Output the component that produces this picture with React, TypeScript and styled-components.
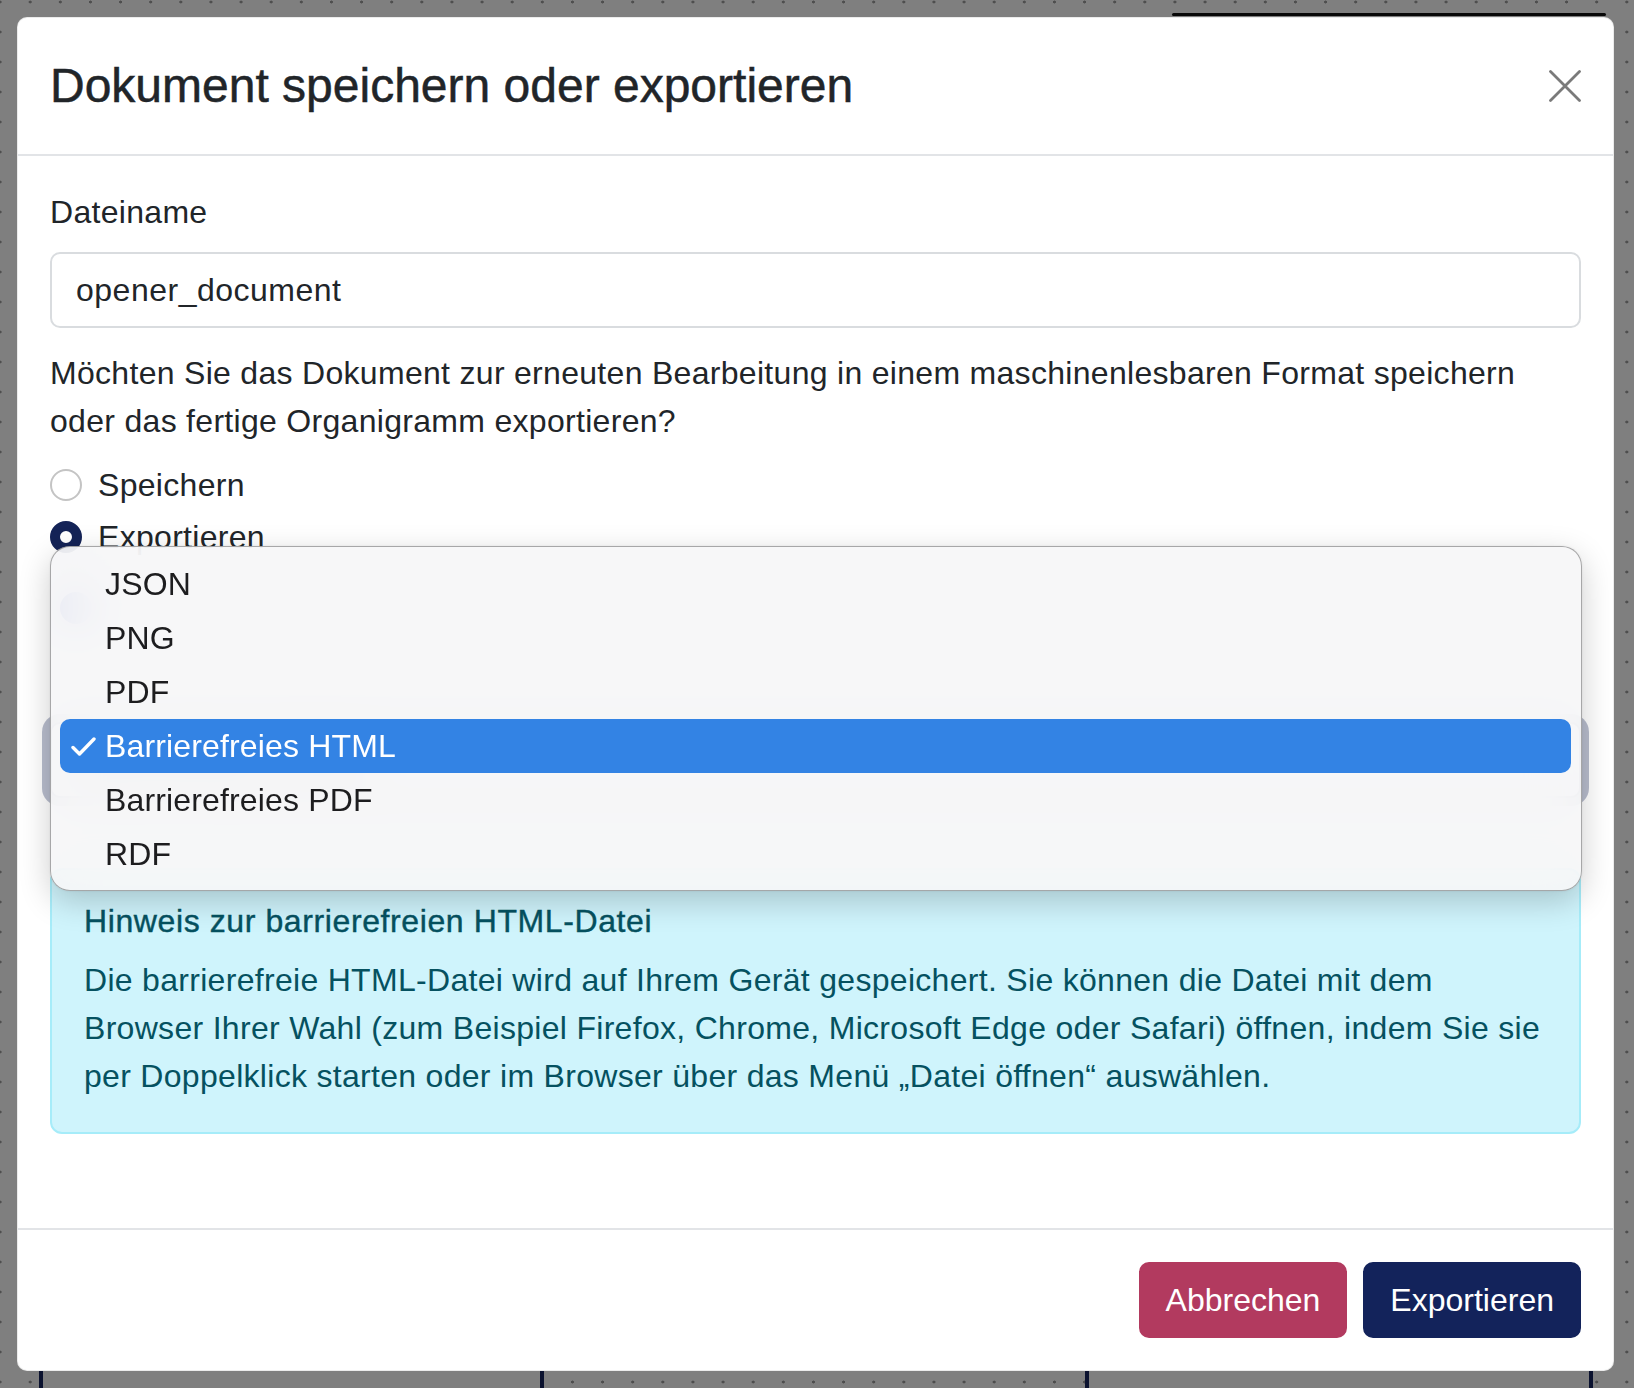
import React from "react";
import styled, { createGlobalStyle } from "styled-components";

const GlobalStyle = createGlobalStyle`
  html, body {
    margin: 0;
    padding: 0;
  }
  body {
    font-family: "Liberation Sans", Arial, sans-serif;
    color: #212529;
  }
  * {
    box-sizing: border-box;
  }
`;

// canvas behind the dialog (org chart editor)
const Page = styled.div`
  position: relative;
  width: 1634px;
  height: 1388px;
  overflow: hidden;
  background-color: #fff;
  background-image: radial-gradient(circle, #9c9c9c 1.2px, transparent 1.8px);
  background-size: 30.13px 30px;
  background-position: -15px -13px;
`;

const ChartNode = styled.div<{ $x: number; $y: number; $w: number }>`
  position: absolute;
  left: ${(p) => p.$x}px;
  top: ${(p) => p.$y}px;
  width: ${(p) => p.$w}px;
  height: 160px;
  background: #fff;
  border: 4px solid #16245e;
  border-radius: 6px;
`;

const Connector = styled.div<{ $x: number; $y: number; $w: number }>`
  position: absolute;
  left: ${(p) => p.$x}px;
  top: ${(p) => p.$y}px;
  width: ${(p) => p.$w}px;
  height: 3px;
  border-radius: 2px;
  background: #111;
`;

const Backdrop = styled.div`
  position: absolute;
  inset: 0;
  background: rgba(0, 0, 0, 0.5);
`;

const ModalLayer = styled.div`
  position: absolute;
  inset: 0;
  padding: 17px 0 0 17px;
`;

const Modal = styled.div`
  width: 1597px;
  height: 1354px;
  display: flex;
  flex-direction: column;
  background: #fff;
  border: 1px solid rgba(0, 0, 0, 0.08);
  border-radius: 10px;
`;

const Header = styled.div`
  height: 138px;
  padding: 0 32px;
  display: flex;
  align-items: center;
  justify-content: space-between;
  border-bottom: 2px solid #e2e4e7;
`;

const Title = styled.h4`
  margin: 0;
  font-size: 48px;
  line-height: 1.2;
  font-weight: 400;
  color: #212529;
  -webkit-text-stroke: 0.5px #212529;
`;

const CloseButton = styled.button`
  width: 32px;
  height: 32px;
  padding: 0;
  border: none;
  background: none;
  display: flex;
  cursor: pointer;
`;

const Body = styled.div`
  position: relative;
  flex: 1;
  padding: 32px 32px 0;
  letter-spacing: 0.3px;
`;

const FieldLabel = styled.label`
  display: block;
  font-size: 32px;
  line-height: 48px;
  margin-bottom: 16px;
`;

const TextInput = styled.input`
  display: block;
  width: 100%;
  height: 76px;
  padding: 12px 24px;
  margin-bottom: 21px;
  font-family: inherit;
  font-size: 32px;
  line-height: 48px;
  letter-spacing: 0.5px;
  color: #212529;
  background: #fff;
  border: 2px solid #d9dcdf;
  border-radius: 10px;
  outline: none;
`;

const Question = styled.p`
  max-width: 1490px;
  margin: 0 0 16px;
  font-size: 32px;
  line-height: 48px;
`;

const CheckRow = styled.div<{ $mb?: number; $mt?: number }>`
  display: flex;
  align-items: center;
  gap: 16px;
  height: 48px;
  margin-top: ${(p) => p.$mt ?? 0}px;
  margin-bottom: ${(p) => p.$mb ?? 0}px;
  font-size: 32px;
`;

const RadioDot = styled.span<{ $checked?: boolean }>`
  width: 32px;
  height: 32px;
  flex: none;
  border-radius: 50%;
  background: #fff;
  border: ${(p) => (p.$checked ? "10px solid #142357" : "2px solid #c4c4c4")};
`;

const CheckBox = styled.span`
  width: 32px;
  height: 32px;
  flex: none;
  margin-left: 10px;
  border-radius: 50%;
  background: #2a46b8;
`;

const Select = styled.select`
  display: block;
  width: 100%;
  height: 76px;
  margin-top: 90px;
  padding: 12px 24px;
  font-family: inherit;
  font-size: 32px;
  color: #212529;
  background: #fff;
  border: 2px solid #8a91ab;
  border-radius: 10px;
  appearance: none;
  box-shadow: 0 0 0 8px rgba(19, 35, 91, 0.3);
`;

const Alert = styled.div`
  margin-top: 70px;
  padding: 32px;
  background: #cff4fc;
  border: 2px solid #a6ecf9;
  border-radius: 12px;
  color: #055160;
`;

const AlertHeading = styled.h5`
  margin: 0 0 16px;
  font-size: 32px;
  line-height: 1.2;
  font-weight: 400;
  letter-spacing: 0.6px;
  -webkit-text-stroke: 0.4px #055160;
`;

const AlertText = styled.p`
  margin: 0;
  font-size: 32px;
  line-height: 48px;
  letter-spacing: 0.3px;
`;

// native select popup (macOS style menu)
const Popup = styled.div`
  position: absolute;
  top: 390px;
  left: 32px;
  width: 1532px;
  padding: 10px 0 9px;
  letter-spacing: 0.15px;
  background: rgba(246, 246, 247, 0.9);
  backdrop-filter: blur(24px);
  border: 1px solid rgba(0, 0, 0, 0.32);
  border-radius: 20px;
  box-shadow: 0 10px 32px rgba(0, 0, 0, 0.2), 0 0 3px rgba(0, 0, 0, 0.08);
`;

const PopupItem = styled.div<{ $active?: boolean }>`
  height: 54px;
  margin: 0 10px 0 9px;
  padding-left: 9px;
  display: flex;
  align-items: center;
  border-radius: 10px;
  font-size: 32px;
  color: ${(p) => (p.$active ? "#fff" : "#1d1d1f")};
  background: ${(p) => (p.$active ? "#3383e4" : "transparent")};
`;

const CheckSlot = styled.span`
  width: 36px;
  flex: none;
  display: flex;
  align-items: center;
  padding-left: 2px;
`;

const Footer = styled.div`
  padding: 24px;
  display: flex;
  justify-content: flex-end;
  border-top: 2px solid #e2e4e7;
`;

const Button = styled.button<{ $variant: "cancel" | "primary" }>`
  margin: 8px;
  padding: 12px 25px;
  font-family: inherit;
  font-size: 32px;
  line-height: 48px;
  color: #fff;
  border: 2px solid ${(p) => (p.$variant === "cancel" ? "#b23a5f" : "#13235b")};
  background: ${(p) => (p.$variant === "cancel" ? "#b23a5f" : "#13235b")};
  border-radius: 10px;
  cursor: pointer;
`;

const formats = ["JSON", "PNG", "PDF", "Barrierefreies HTML", "Barrierefreies PDF", "RDF"];

export default function App() {
  const selected = "Barrierefreies HTML";

  return (
    <Page>
      <GlobalStyle />
      <Connector $x={1172} $y={13} $w={434} />
      <ChartNode $x={39} $y={1360} $w={505} />
      <ChartNode $x={1085} $y={1360} $w={508} />
      <Backdrop />

      <ModalLayer>
        <Modal role="dialog" aria-modal="true">
          <Header>
            <Title>Dokument speichern oder exportieren</Title>
            <CloseButton aria-label="Schließen">
              <svg width="32" height="32" viewBox="0 0 32 32">
                <path d="M1.5 1.5 L30.5 30.5 M30.5 1.5 L1.5 30.5" stroke="#7a7a7a" strokeWidth="2.8" strokeLinecap="round" />
              </svg>
            </CloseButton>
          </Header>

          <Body>
            <FieldLabel htmlFor="filename">Dateiname</FieldLabel>
            <TextInput id="filename" defaultValue="opener_document" />

            <Question>
              Möchten Sie das Dokument zur erneuten Bearbeitung in einem maschinenlesbaren Format speichern
              oder das fertige Organigramm exportieren?
            </Question>

            <CheckRow $mb={4}>
              <RadioDot />
              Speichern
            </CheckRow>
            <CheckRow>
              <RadioDot $checked />
              Exportieren
            </CheckRow>

            <CheckRow $mt={23} aria-hidden="true">
              <CheckBox />
            </CheckRow>

            <Select id="format" aria-label="Dateiformat" defaultValue={selected}>
              {formats.map((f) => (
                <option key={f}>{f}</option>
              ))}
            </Select>

            <Alert>
              <AlertHeading>Hinweis zur barrierefreien HTML-Datei</AlertHeading>
              <AlertText>
                Die barrierefreie HTML-Datei wird auf Ihrem Gerät gespeichert. Sie können die Datei mit dem
                Browser Ihrer Wahl (zum Beispiel Firefox, Chrome, Microsoft Edge oder Safari) öffnen, indem Sie
                sie per Doppelklick starten oder im Browser über das Menü „Datei öffnen“ auswählen.
              </AlertText>
            </Alert>

            <Popup role="listbox">
              {formats.map((f) => (
                <PopupItem key={f} $active={f === selected}>
                  <CheckSlot>
                    {f === selected && (
                      <svg width="25" height="19" viewBox="0 0 25 19">
                        <path d="M2 10.5 L8.5 17 L23 2" fill="none" stroke="#fff" strokeWidth="3.4" strokeLinecap="round" strokeLinejoin="round" />
                      </svg>
                    )}
                  </CheckSlot>
                  {f}
                </PopupItem>
              ))}
            </Popup>
          </Body>

          <Footer>
            <Button $variant="cancel">Abbrechen</Button>
            <Button $variant="primary">Exportieren</Button>
          </Footer>
        </Modal>
      </ModalLayer>
    </Page>
  );
}
